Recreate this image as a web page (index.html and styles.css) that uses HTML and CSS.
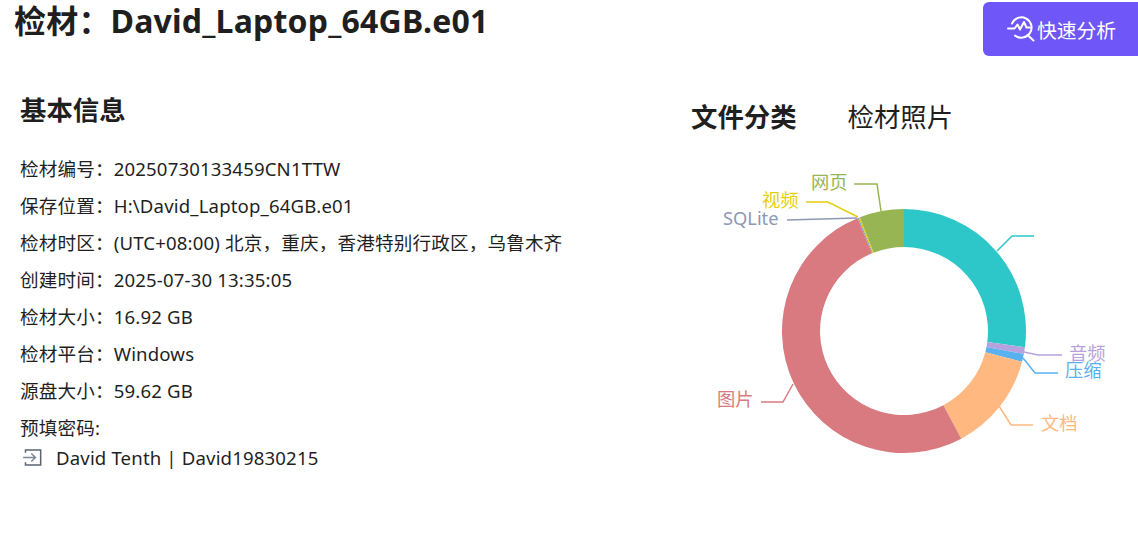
FILE: index.html
```html
<!DOCTYPE html>
<html lang="zh-CN">
<head>
    <meta charset="UTF-8">
    <title>检材详情</title>
    <link rel="stylesheet" href="styles.css">
</head>
<body>
    <div class="page">
        <div class="header">
            <h1>检材：David_Laptop_64GB.e01</h1>
            <button class="analyze-btn">
                <svg class="analyze-icon" viewBox="0 0 30 28" fill="none" stroke="#fff" stroke-width="2" stroke-linecap="round" stroke-linejoin="round">
                    <path d="M5 8.500A10.200 10.200 0 1 1 8 20.500"/>
                    <path d="M1 13.500H7.500L10.500 9.500L13 14.500L17 7L19.500 12.500H23"/>
                    <path d="M20.500 20L26.500 25.500"/>
                </svg>
                <span>快速分析</span>
            </button>
        </div>
        <div class="content">
            <div class="info">
                <h2>基本信息</h2>
                <div class="info-row">检材编号：20250730133459CN1TTW</div>
                <div class="info-row">保存位置：H:\David_Laptop_64GB.e01</div>
                <div class="info-row">检材时区：(UTC+08:00) 北京，重庆，香港特别行政区，乌鲁木齐</div>
                <div class="info-row">创建时间：2025-07-30 13:35:05</div>
                <div class="info-row">检材大小：16.92 GB</div>
                <div class="info-row">检材平台：Windows</div>
                <div class="info-row">源盘大小：59.62 GB</div>
                <div class="info-row">预填密码:</div>
                <div class="password-row">
                    <svg class="login-icon" viewBox="0 0 18 18" fill="none" stroke-width="1.300">
                        <path d="M3 5V2.500H16V15.500H3V13" stroke="#5a6472"/>
                        <path d="M1 9H11M8 5.500L11.500 9L8 12.500" stroke="#7d8794"/>
                    </svg>
                    <span>David Tenth | David19830215</span>
                </div>
            </div>
            <div class="side">
                <div class="tabs">
                    <span class="tab active">文件分类</span>
                    <span class="tab">检材照片</span>
                </div>
                <svg class="chart" id="chart" width="446" height="330" viewBox="0 0 446 330"></svg>
            </div>
        </div>
    </div>
    <script src="chart.js"></script>
</body>
</html>
```

FILE: styles.css
```css
* {
    box-sizing: border-box;
}
body {
    margin: 0;
    background: #fff;
    color: #1f1f1f;
    font-family: "Noto Sans", "Noto Sans CJK SC", sans-serif;
    overflow: hidden;
}
.page {
    width: 1138px;
    height: 548px;
}
.header {
    display: flex;
    justify-content: space-between;
    align-items: flex-start;
    padding: 2px 0 0 14px;
}
h1 {
    margin: -3px 0 0;
    font-size: 32px;
    line-height: 44px;
    font-weight: 700;
    letter-spacing: 0.2px;
}
.analyze-btn {
    display: flex;
    align-items: center;
    justify-content: center;
    width: 155px;
    height: 54px;
    padding: 0 0 0 2px;
    border: none;
    border-radius: 6px 0 0 6px;
    background: #6e56f8;
    color: #fff;
    font-family: inherit;
    font-size: 19.800px;
}
.analyze-icon {
    width: 30px;
    height: 28px;
}
.content {
    display: flex;
    padding: 36px 0 0 20px;
}
.info {
    width: 671px;
}
h2 {
    margin: 0 0 22px;
    font-size: 26.400px;
    line-height: 36px;
    font-weight: 700;
}
.info-row {
    height: 37px;
    font-size: 18.600px;
    line-height: 37px;
    letter-spacing: 0.150px;
}
.password-row {
    display: flex;
    align-items: center;
    gap: 13px;
    height: 23px;
    font-size: 18.600px;
    line-height: 23px;
    letter-spacing: 0.150px;
}
.login-icon {
    width: 21px;
    height: 21px;
    margin-left: 2px;
}
.tabs {
    display: flex;
    gap: 51px;
    padding-top: 7px;
    font-size: 26.400px;
    line-height: 36px;
}
.tab.active {
    font-weight: 700;
}
.chart {
    display: block;
    margin-top: 24px;
    margin-left: 1px;
}
.chart text {
    font-size: 18.300px;
}
```

FILE: chart.js
```js
// donut, angles in degrees clockwise from top
var cx = 212, cy = 172, outer = 122, inner = 84;
var slices = [
    { color: '#2ec7c9', from: 0, to: 97.6 },
    { color: '#b6a2de', from: 97.6, to: 100.9 },
    { color: '#5ab1ef', from: 100.9, to: 104.6 },
    { color: '#ffb980', from: 104.6, to: 152 },
    { color: '#d87a80', from: 152, to: 337.6 },
    { color: '#8d98b3', from: 337.6, to: 338.2 },
    { color: '#e5cf0d', from: 338.2, to: 338.8 },
    { color: '#97b552', from: 338.8, to: 360 }
];
// label lines use chart coords, page offset is 692,159
var labels = [
    { text: '', color: '#2ec7c9', line: '305,92 320,77 342,77' },
    { text: '音频', color: '#b6a2de', line: '332,193 346,196 370,196', x: 377, y: 201 },
    { text: '压缩', color: '#5ab1ef', line: '331,199 343,214 366,214', x: 373, y: 218 },
    { text: '文档', color: '#ffb980', line: '307,247 319,266 341,266', x: 349, y: 271 },
    { text: '图片', color: '#d87a80', line: '101,225 91,243 69,243', x: 25, y: 247 },
    { text: 'SQLite', color: '#8d98b3', line: '165,59 95,61', x: 31, y: 66 },
    { text: '视频', color: '#e5cf0d', line: '166,58 136,43 114,43', x: 70, y: 48 },
    { text: '网页', color: '#97b552', line: '189,52 185,25 162,25', x: 119, y: 30 }
];

function pt(r, a) {
    var rad = a * Math.PI / 180;
    return (cx + r * Math.sin(rad)).toFixed(2) + ' ' + (cy - r * Math.cos(rad)).toFixed(2);
}

var html = '';
slices.forEach(function (s) {
    var big = s.to - s.from > 180 ? 1 : 0;
    var d = 'M' + pt(outer, s.from) + 'A' + outer + ' ' + outer + ' 0 ' + big + ' 1 ' + pt(outer, s.to) +
        'L' + pt(inner, s.to) + 'A' + inner + ' ' + inner + ' 0 ' + big + ' 0 ' + pt(inner, s.from) + 'Z';
    html += '<path d="' + d + '" fill="' + s.color + '"/>';
});
labels.forEach(function (l) {
    html += '<polyline points="' + l.line + '" fill="none" stroke="' + l.color + '" stroke-width="1.500"/>';
    if (l.text) {
        html += '<text x="' + l.x + '" y="' + l.y + '" fill="' + l.color + '">' + l.text + '</text>';
    }
});
document.getElementById('chart').innerHTML = html;
```
